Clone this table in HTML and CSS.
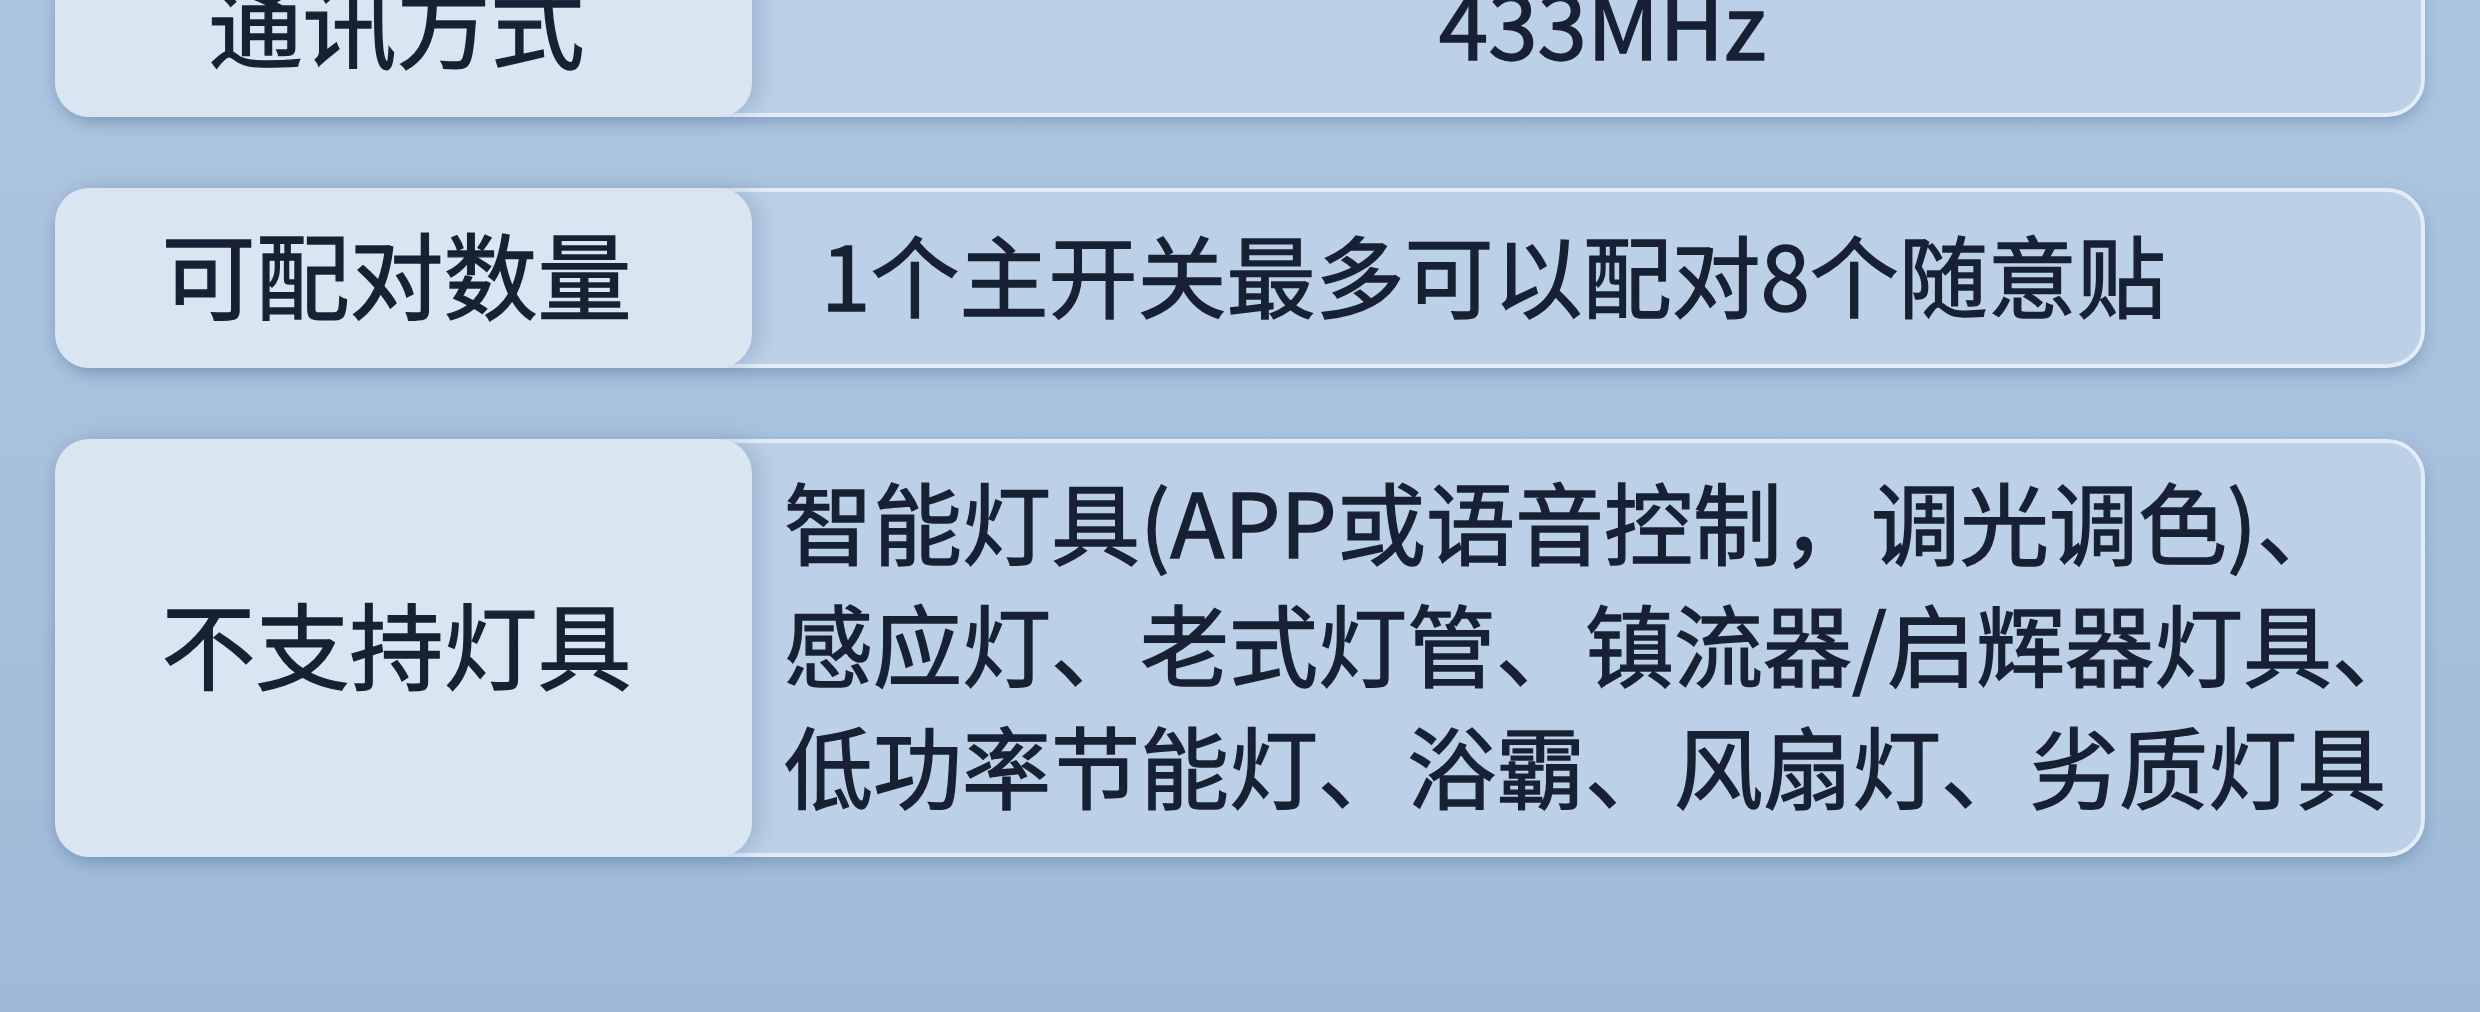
FILE: index.html
```html
<!DOCTYPE html>
<html lang="zh-CN">
<head>
    <meta charset="UTF-8">
    <meta name="viewport" content="width=device-width, initial-scale=1.0">
    <title>产品参数</title>
    <link rel="stylesheet" href="styles.css">
</head>
<body>
    <div class="specs">
        <div class="spec-row">
            <div class="spec-label">通讯方式</div>
            <div class="spec-value">433MHz</div>
        </div>
        <div class="spec-row">
            <div class="spec-label">可配对数量</div>
            <div class="spec-value spec-value-left">1个主开关最多可以配对8个随意贴</div>
        </div>
        <div class="spec-row spec-row-tall">
            <div class="spec-label">不支持灯具</div>
            <div class="spec-value">
                <p class="value-lines">智能灯具(APP或语音控制，调光调色)、<br>感应灯、老式灯管、镇流器/启辉器灯具、<br>低功率节能灯、浴霸、风扇灯、劣质灯具</p>
            </div>
        </div>
    </div>
</body>
</html>
```

FILE: styles.css
```css
body {
    margin: 0;
    padding: 0;
    height: 1012px;
    overflow: hidden;
    background: linear-gradient(180deg, #adc5df 0%, #a6bfdb 60%, #9fb9d6 100%);
    font-family: "Noto Sans CJK SC", "Noto Sans", sans-serif;
    color: #172133;
}
.specs {
    display: flex;
    flex-direction: column;
    gap: 71px;
    margin-top: -63px;
    padding: 0 55px;
}
.spec-row {
    display: flex;
    height: 172px;
    background-color: #bcd1e7;
    border: 4px solid #e2edf9;
    border-radius: 38px;
    box-shadow: 0 6px 14px rgba(70, 105, 150, 0.35);
}
.spec-row-tall {
    height: 410px;
}
.spec-label {
    flex: 0 0 697px;
    margin: -4px 0 -4px -4px;
    padding: 0 14px 12px 0;
    box-sizing: border-box;
    display: flex;
    align-items: center;
    justify-content: center;
    background-color: #d9e6f2;
    border-radius: 34px;
    box-shadow: 10px 0 18px rgba(85, 115, 155, 0.25);
    font-size: 94px;
    font-weight: 400;
    -webkit-text-stroke: 1.4px #172133;
}
.spec-value {
    flex-grow: 1;
    display: flex;
    align-items: center;
    justify-content: center;
    padding: 0 0 12px 32px;
    font-size: 89px;
    font-weight: 400;
    -webkit-text-stroke: 1.4px #172133;
    white-space: nowrap;
}
.spec-value-left {
    justify-content: flex-start;
    padding-left: 69px;
}
.value-lines {
    margin: 0;
    line-height: 122px;
}
```
